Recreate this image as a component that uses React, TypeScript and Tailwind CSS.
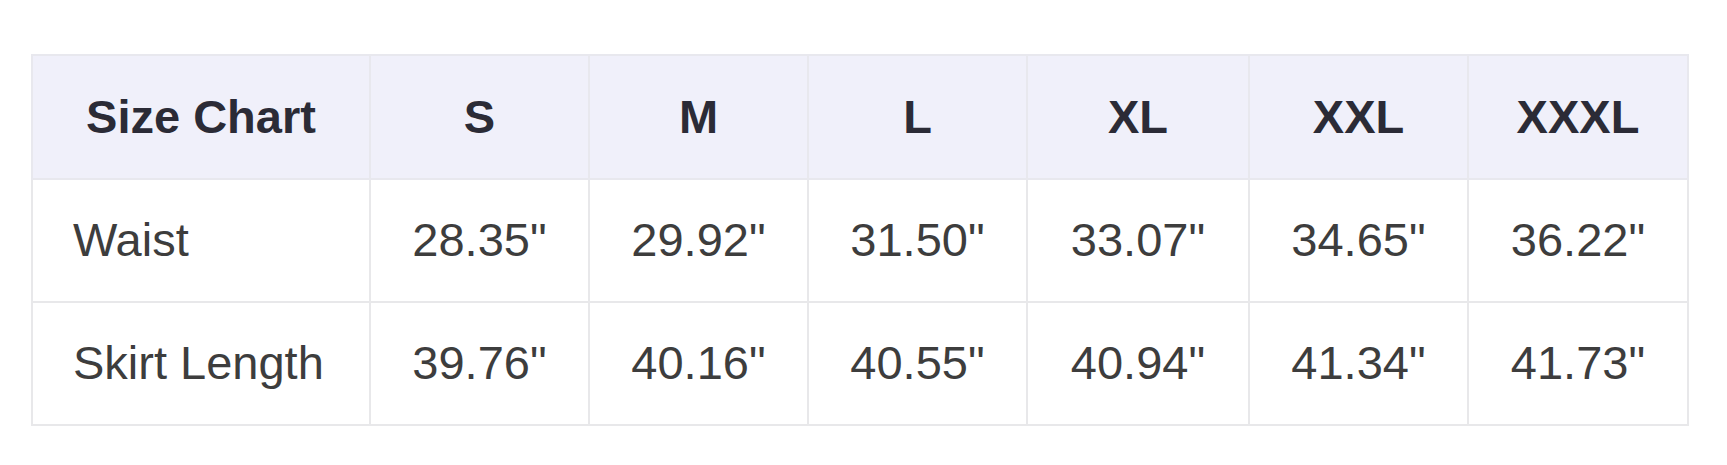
import React from "react";

const sizes = ["S", "M", "L", "XL", "XXL", "XXXL"];
const rows: { label: string; values: string[] }[] = [
  { label: "Waist", values: ['28.35"', '29.92"', '31.50"', '33.07"', '34.65"', '36.22"'] },
  { label: "Skirt Length", values: ['39.76"', '40.16"', '40.55"', '40.94"', '41.34"', '41.73"'] },
];

export default function App() {
  return (
    <div className="w-[1727px] h-[465px] bg-white pt-[54px] pl-[31px] font-[family-name:Liberation_Sans,Arial,sans-serif]">
      <table className="table-fixed border-collapse w-[1656px] text-[47px] font-[family-name:Liberation_Sans,Arial,sans-serif]">
        <colgroup>
          <col className="w-[338px]" />
          <col className="w-[219px]" />
          <col className="w-[219px]" />
          <col className="w-[219px]" />
          <col className="w-[222px]" />
          <col className="w-[219px]" />
          <col className="w-[220px]" />
        </colgroup>
        <thead>
          <tr className="h-[124px] bg-[#f0f0fa]">
            <th className="border-2 border-[#e8e8ee] text-center font-bold text-[#2b2b36]">Size Chart</th>
            {sizes.map((s) => (
              <th key={s} className="border-2 border-[#e8e8ee] text-center font-bold text-[#2b2b36]">
                {s}
              </th>
            ))}
          </tr>
        </thead>
        <tbody>
          {rows.map((r) => (
            <tr key={r.label} className="h-[123px]">
              <td className="border-2 border-[#e8e8ea] pl-[40px] text-left text-[#3d3d3d]">{r.label}</td>
              {r.values.map((v, i) => (
                <td key={i} className="border-2 border-[#e8e8ea] text-center text-[#3d3d3d]">
                  {v}
                </td>
              ))}
            </tr>
          ))}
        </tbody>
      </table>
    </div>
  );
}
